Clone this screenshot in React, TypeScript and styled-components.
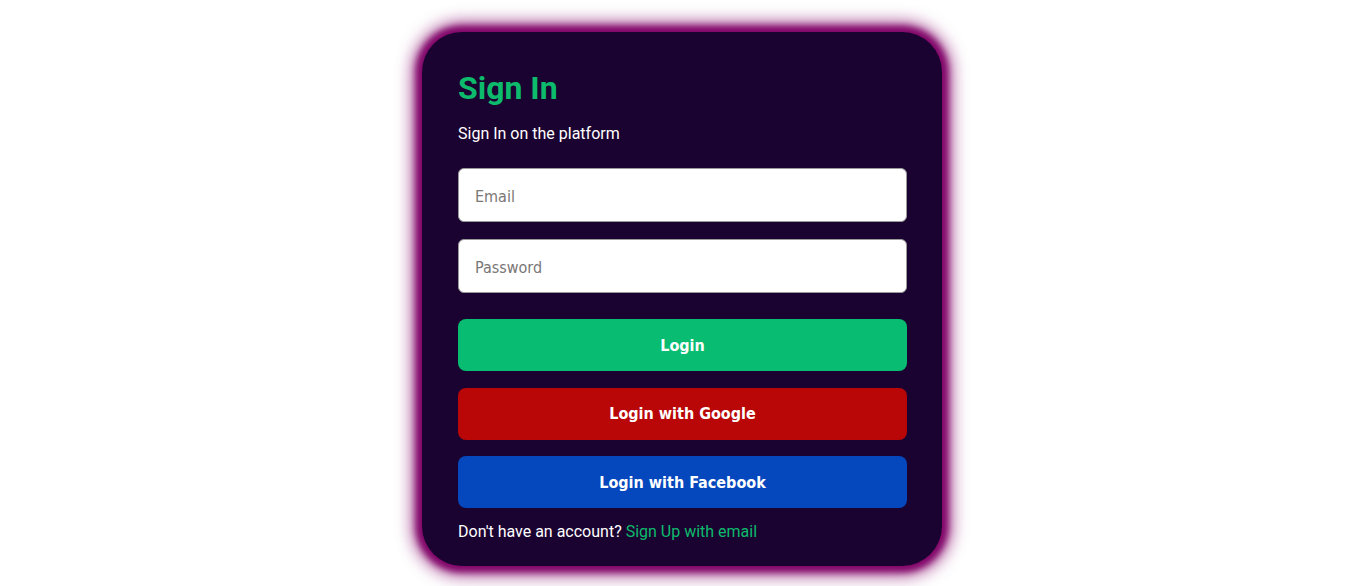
import * as React from "react";
import styled, { createGlobalStyle } from "styled-components";

const GlobalStyle = createGlobalStyle`
  html, body {
    margin: 0;
    padding: 0;
    background: #ffffff;
  }
`;

const Page = styled.main`
  display: flex;
  justify-content: center;
  padding: 32px 0 20px 19px;
`;

const Card = styled.div`
  width: 520px;
  box-sizing: border-box;
  padding: 36px 35px 24px 36px;
  background-color: #1b0331;
  border-radius: 40px;
  box-shadow: 0 0 6px 6px #82076a, 0 0 16px 10px rgba(133, 9, 107, 0.7);
  font-family: Roboto, "Liberation Sans", sans-serif;
  display: flex;
  flex-direction: column;
`;

const Title = styled.h1`
  margin: 0;
  font-size: 32px;
  font-weight: 700;
  color: #0dbb6c;
  line-height: 40px;
`;

const Subtitle = styled.p`
  margin: 16px 0 24px;
  font-size: 16px;
  color: #ffffff;
  line-height: 20px;
`;

const Form = styled.form`
  display: flex;
  flex-direction: column;
`;

const Input = styled.input`
  height: 54px;
  box-sizing: border-box;
  padding: 2px 16px 0;
  margin-bottom: 17px;
  border: 1px solid #9a9a9a;
  border-radius: 6px;
  background: #ffffff;
  font-family: Tahoma, "DejaVu Sans Condensed", sans-serif;
  font-size: 16px;
  outline: none;
  &::placeholder {
    color: #7a7676;
  }
`;

const Button = styled.button<{ $bg: string; $first?: boolean }>`
  height: 52px;
  margin-top: ${(p) => (p.$first ? "9px" : "0")};
  margin-bottom: 16.5px;
  border: none;
  border-radius: 8px;
  background-color: ${(p) => p.$bg};
  color: #ffffff;
  font-family: Tahoma, "DejaVu Sans Condensed", sans-serif;
  font-weight: bold;
  font-size: 16px;
  cursor: pointer;
  &:last-child {
    margin-bottom: 14px;
  }
`;

const Footer = styled.p`
  margin: 0;
  font-size: 16px;
  color: #ffffff;
  line-height: 20px;
`;

const SignUpLink = styled.a`
  color: #0dbb6c;
  text-decoration: none;
  cursor: pointer;
`;

const App = () => {
  return (
    <>
      <GlobalStyle />
      <Page>
        <Card>
          <Title>Sign In</Title>
          <Subtitle>Sign In on the platform</Subtitle>
          <Form onSubmit={(e) => e.preventDefault()}>
            <Input type="email" placeholder="Email" />
            <Input type="password" placeholder="Password" />
            <Button $bg="#08bd71" $first>
              Login
            </Button>
            <Button $bg="#b90707" type="button">
              Login with Google
            </Button>
            <Button $bg="#0547bd" type="button">
              Login with Facebook
            </Button>
          </Form>
          <Footer>
            Don't have an account? <SignUpLink>Sign Up with email</SignUpLink>
          </Footer>
        </Card>
      </Page>
    </>
  );
};

export default App;
